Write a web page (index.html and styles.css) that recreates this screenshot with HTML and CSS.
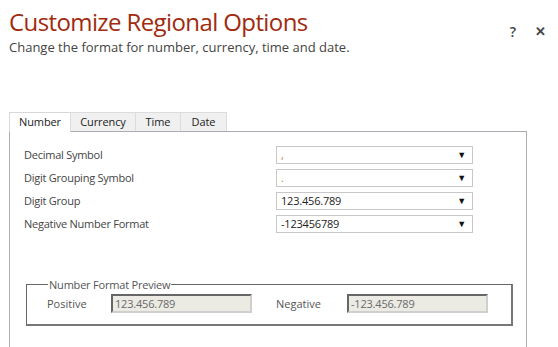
FILE: index.html
```html
<!DOCTYPE html>
<html lang="en">
<head>
  <meta charset="UTF-8" />
  <title>Customize Regional Options</title>
  <link rel="stylesheet" href="styles.css">
</head>
<body>
  <div class="dialog">
    <header class="dlg-head">
      <div>
        <h1>Customize Regional Options</h1>
        <p>Change the format for number, currency, time and date.</p>
      </div>
      <div class="dlg-buttons">
        <span class="help">?</span>
        <span class="close">&#x2715;</span>
      </div>
    </header>

    <div class="tabs">
      <span class="tab active">Number</span>
      <span class="tab t-cur">Currency</span>
      <span class="tab t-time">Time</span>
      <span class="tab t-date">Date</span>
    </div>

    <div class="panel">
      <div class="row">
        <label>Decimal Symbol</label>
        <div class="select"><span>,</span><i>&#9660;</i></div>
      </div>
      <div class="row">
        <label>Digit Grouping Symbol</label>
        <div class="select"><span>.</span><i>&#9660;</i></div>
      </div>
      <div class="row">
        <label>Digit Group</label>
        <div class="select"><span class="val">123.456.789</span><i>&#9660;</i></div>
      </div>
      <div class="row">
        <label>Negative Number Format</label>
        <div class="select"><span class="val">-123456789</span><i>&#9660;</i></div>
      </div>

      <fieldset class="preview">
        <legend>Number Format Preview</legend>
        <div class="prev-row">
          <span class="prev-label">Positive</span>
          <span class="prev-box">123.456.789</span>
          <span class="prev-label neg">Negative</span>
          <span class="prev-box">-123.456.789</span>
        </div>
      </fieldset>
    </div>
  </div>
</body>
</html>
```

FILE: styles.css
```css
* { box-sizing: border-box; margin: 0; padding: 0; }
body { font-family: "Open Sans", "Noto Sans", sans-serif; background: #fff; color: #444; width: 558px; height: 347px; overflow: hidden; }
.dialog { padding: 6px 0 0 9px; }

.dlg-head { display: flex; justify-content: space-between; align-items: flex-start; }
.dlg-head h1 { font-size: 24px; font-weight: 400; color: #a02b0e; line-height: 32px; letter-spacing: -0.6px; }
.dlg-head p { font-size: 13px; color: #444; line-height: 18px; }
.dlg-buttons { display: flex; gap: 19px; margin: 16px 12px 0 0; font-size: 14px; color: #444; font-weight: 600; }
.dlg-buttons .close { font-size: 13px; }

.tabs { display: flex; margin-top: 56px; width: 518px; border-bottom: 1px solid #a9adb3; }
.tab { font-size: 11px; letter-spacing: -0.1px; color: #222; text-align: center; height: 19px; line-height: 18px; background: #f0f0f0; border: 1px solid #dcdcdc; border-bottom: none; margin-left: -1px; }
.tab.active { background: #fff; border-color: #d8d8d8; width: 62px; margin-left: 0; margin-bottom: -1px; height: 20px; }
.t-cur { width: 66px; }
.t-time { width: 46px; }
.t-date { width: 47px; }

.panel { width: 518px; height: 220px; border-left: 1px solid #a9adb3; border-right: 1px solid #a9adb3; padding: 11px 0 0 14px; }
.row { display: flex; align-items: center; height: 23px; }
.row label { width: 252px; font-size: 11px; letter-spacing: -0.25px; color: #444; }
.select { width: 197px; height: 18px; border: 1px solid #c8c8c8; display: flex; align-items: center; justify-content: space-between; padding: 0 6px 0 4px; font-size: 11px; letter-spacing: -0.2px; color: #c08a30; }
.select .val { color: #222; }
.select i { font-style: normal; font-size: 9px; color: #111; }

.preview { width: 487px; margin: 42px 0 0 2px; border-style: solid; border-width: 1px 2px 2px 1px; border-color: #666 #777 #777 #666; padding: 2px 10px 11px 20px; }
.preview legend { font-size: 11px; letter-spacing: -0.2px; color: #555; padding: 0 1px; margin-left: 1px; }
.prev-row { display: flex; align-items: center; }
.prev-label { font-size: 11px; color: #555; width: 64px; }
.prev-label.neg { width: 71px; margin-left: 24px; }
.prev-box { width: 141px; height: 19px; background: #ebebe4; border: 2px solid #cfcfcf; border-top-color: #666; border-left-color: #666; font-size: 11px; letter-spacing: -0.2px; color: #6a6a6a; line-height: 15px; padding-left: 2px; }
```
